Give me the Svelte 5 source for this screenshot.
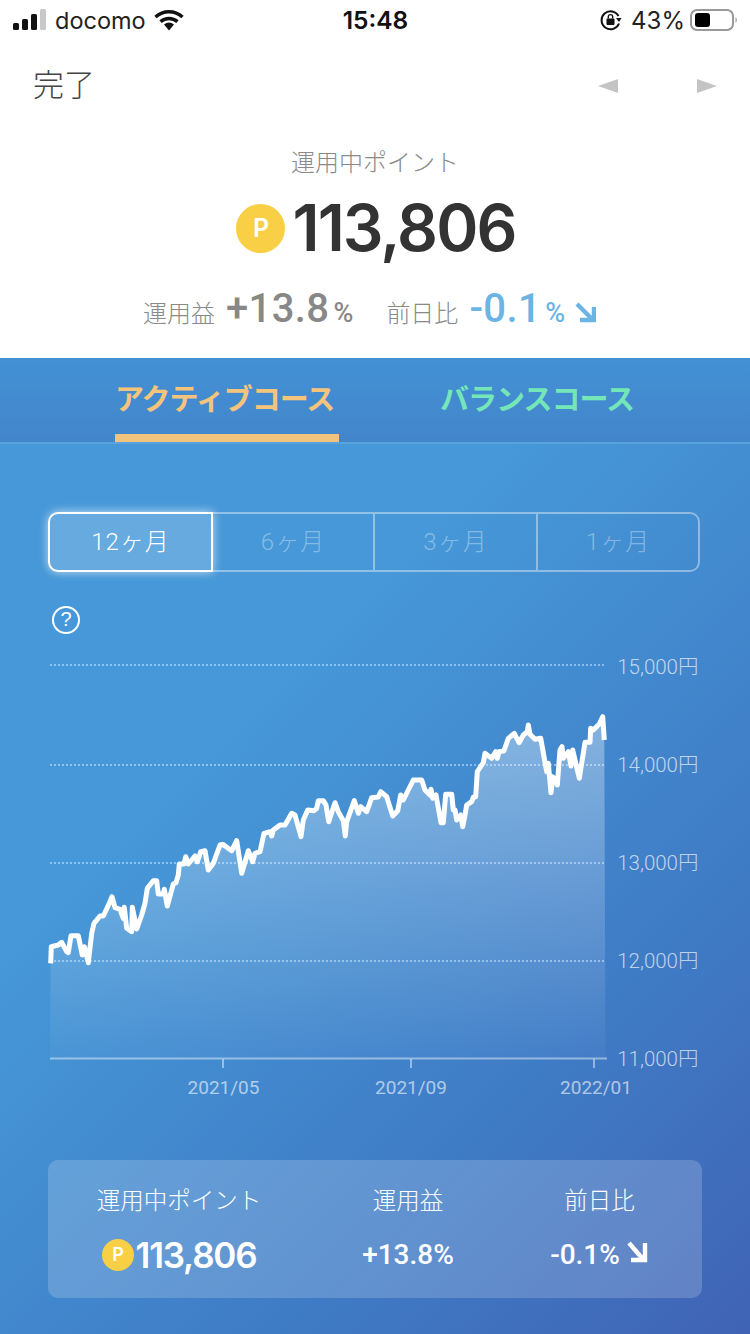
<script>
  const a = [[32,550],[34,500],[55,495],[65,487],[80,515],[85,518],[93,467],[115,467],[127,525],[133,500],[145,548],[155,460],[162,430],[180,408],[190,408],[208,370],[216,350],[225,383],[240,388],[250,415],[253,382],[260,445],[275,455],[277,382],[290,447],[305,405],[315,370],[322,325],[340,302],[350,302],[355,342],[370,342],[373,328],[382,378],[400,312],[408,308],[415,285],[418,252],[432,252],[437,230],[445,252],[465,228],[472,245],[482,215],[495,212],[505,270],[520,250],[540,195],[548,193],[575,212],[590,182],[605,280],[625,212],[638,245],[645,220],[660,215],[672,160],[690,155],[695,168],[700,150],[720,135],[735,135],[755,100],[765,105],[783,170],[790,120],[803,90],[822,92],[830,85],[835,62],[850,62],[858,75],[866,125],[885,68]];
  const b = [[25,335],[40,362],[46,408],[50,365],[73,302],[85,340],[92,320],[110,335],[125,293],[145,291],[152,275],[170,290],[188,348],[203,332],[212,285],[220,300],[250,240],[275,240],[285,270],[300,285],[303,268],[308,295],[318,285],[333,368],[340,368],[347,283],[365,283],[370,330],[375,330],[380,360],[392,345],[398,380],[405,345],[410,315],[425,305],[430,292],[437,290],[442,215],[460,188],[465,160],[485,175],[497,155],[502,175],[507,155],[522,152],[535,115],[553,100],[567,128],[580,105],[592,95],[595,75],[600,103],[615,118],[632,115],[650,215],[655,190],[663,278],[668,230],[682,255],[690,150],[696,140],[700,175],[715,155],[723,198],[728,150],[748,235],[765,127],[780,127],[782,85],[790,90],[808,72],[818,50],[823,120]];
  const pts = [
    ...a.map(([x, y]) => [x / 3 + 40, y / 3 + 780]),
    ...b.map(([x, y]) => [x / 3 + 330, y / 3 + 700])
  ].map(([x, y]) => `${x.toFixed(1)} ${y.toFixed(1)}`);
  const line = 'M' + pts.join(' L');
  const area = `${line} L605.5 1058 L50 1058 Z`;
  const ylabels = [['15,000円', 667], ['14,000円', 765], ['13,000円', 863], ['12,000円', 961], ['11,000円', 1059]];
  const grid = [665, 765, 863, 961];
  const xlabels = [['2021/05', 223, 223.5], ['2021/09', 411, 411], ['2022/01', 594, 596]];
  const ranges = ['12ヶ月', '6ヶ月', '3ヶ月', '1ヶ月'];
</script>

<div class="screen">
  <div class="status">
    <div class="st-left">
      <svg class="signal" width="34" height="22" viewBox="0 0 34 22">
        <rect x="0" y="14" width="6" height="7" rx="1.5" fill="#111" />
        <rect x="9" y="10" width="6" height="11" rx="1.5" fill="#111" />
        <rect x="18" y="5" width="6" height="16" rx="1.5" fill="#111" />
        <rect x="27" y="0" width="6" height="21" rx="1.5" fill="#c8c8c8" />
      </svg>
      <span class="carrier">docomo</span>
      <svg class="wifi" width="30" height="22" viewBox="0 0 30 22">
        <path d="M1.5 8 A20 20 0 0 1 28.5 8" fill="none" stroke="#111" stroke-width="3.4" />
        <path d="M6.5 12.6 A13 13 0 0 1 23.5 12.6" fill="none" stroke="#111" stroke-width="3.4" />
        <path d="M10 15.5 A8 8 0 0 1 20 15.5 L15 21.5 Z" fill="#111" />
      </svg>
    </div>
    <div class="time">15:48</div>
    <div class="st-right">
      <svg width="22" height="22" viewBox="0 0 22 22">
        <path d="M18.5 7 A9 9 0 1 0 19 14.5" fill="none" stroke="#111" stroke-width="2" />
        <path d="M16 9 L21.5 9 L19 13 Z" fill="#111" />
        <rect x="6.5" y="9.5" width="8" height="6.5" rx="1" fill="#111" />
        <path d="M8.3 9.5 V7.8 A2.2 2.2 0 0 1 12.7 7.8 V9.5" fill="none" stroke="#111" stroke-width="1.4" />
      </svg>
      <span class="pct">43%</span>
      <svg width="48" height="22" viewBox="0 0 48 22">
        <rect x="1" y="1" width="42" height="20" rx="6" fill="none" stroke="#999" stroke-width="2" />
        <rect x="5" y="4" width="15" height="14" rx="3" fill="#000" />
        <path d="M45.5 8 A4 4 0 0 1 45.5 14 Z" fill="#999" />
      </svg>
    </div>
  </div>

  <div class="nav">
    <span class="done">完了</span>
    <div class="arrows">
      <span class="tri left"></span>
      <span class="tri right"></span>
    </div>
  </div>

  <header class="head">
    <div class="h-label">運用中ポイント</div>
    <div class="h-total">
      <span class="coin big">P</span>
      <span class="h-num">113,806</span>
    </div>
    <div class="h-stats">
      <span class="s-label">運用益</span>
      <span class="s-num">+13.8</span>
      <span class="s-unit">%</span>
      <span class="s-label second">前日比</span>
      <span class="s-num blue">-0.1</span>
      <span class="s-unit blue">%</span>
      <svg class="s-arrow" width="22" height="22" viewBox="0 0 22 22">
        <path d="M3 3 L17 17 M20 6 V19 H6" fill="none" stroke="#6cb4e4" stroke-width="4.4" />
      </svg>
    </div>
  </header>

  <section class="panel">
    <nav class="tabs">
      <div class="tab active">アクティブコース</div>
      <div class="tab green">バランスコース</div>
    </nav>

    <div class="segments">
      {#each ranges as r, i}
        <div class="seg" class:on={i === 0}>{r}</div>
      {/each}
    </div>

    <svg class="help" width="30" height="30" viewBox="0 0 30 30">
      <circle cx="15" cy="15" r="13" fill="none" stroke="#fff" stroke-width="2" />
      <text x="15" y="21" text-anchor="middle" class="q">?</text>
    </svg>

    <svg class="chart" width="750" height="450" viewBox="0 650 750 450">
      <defs>
        <linearGradient id="fill" gradientUnits="userSpaceOnUse" x1="0" y1="715" x2="0" y2="1058">
          <stop offset="0" stop-color="#fff" stop-opacity="0.36" />
          <stop offset="1" stop-color="#fff" stop-opacity="0.03" />
        </linearGradient>
      </defs>
      <path d={area} fill="url(#fill)" />
      {#each grid as y}
        <line x1="50" x2="605" y1={y} y2={y} class="dots" />
      {/each}
      <path d={line} class="plot" />
      <line x1="50" x2="607" y1="1058.5" y2="1058.5" class="axis" />
      {#each xlabels as [t, tick, cx]}
        <line x1={tick} x2={tick} y1="1059" y2="1068" class="tick" />
        <text x={cx} y="1094" text-anchor="middle" class="xl">{t}</text>
      {/each}
      {#each ylabels as [t, y]}
        <text x="698.5" y={y + 7} text-anchor="end" class="yl">{t}</text>
      {/each}
    </svg>

    <div class="summary">
      <div class="col c1">
        <div class="c-label">運用中ポイント</div>
        <div class="c-val total"><span class="coin small">P</span><span>113,806</span></div>
      </div>
      <div class="col c2">
        <div class="c-label">運用益</div>
        <div class="c-val">+13.8%</div>
      </div>
      <div class="col c3">
        <div class="c-label">前日比</div>
        <div class="c-val">-0.1%
          <svg width="24" height="26" viewBox="0 0 22 26" class="c-arrow">
            <path d="M3 4 L16 19 M19 4 V21 H5" fill="none" stroke="#fff" stroke-width="4.4" />
          </svg>
        </div>
      </div>
    </div>
  </section>
</div>

<style>
  :global(body) { margin: 0; }
  .screen {
    width: 750px;
    height: 1334px;
    display: flex;
    flex-direction: column;
    overflow: hidden;
    background: #fff;
    font-family: "Noto Sans CJK JP", "Noto Sans", sans-serif;
  }
  .status {
    height: 40px;
    flex: none;
    display: grid;
    grid-template-columns: 1fr auto 1fr;
    align-items: center;
    padding: 0 12px 0 13px;
    color: #111;
    font-family: "Inter", "Liberation Sans", sans-serif;
  }
  .st-left { display: flex; align-items: center; gap: 8px; }
  .carrier { font-size: 23.5px; color: #222; }
  .time { font-size: 24.5px; font-weight: 600; }
  .st-right { display: flex; align-items: center; justify-content: flex-end; gap: 9px; }
  .pct { font-size: 24px; color: #222; margin-right: -4px; }

  .nav {
    height: 88px;
    flex: none;
    display: flex;
    align-items: center;
    justify-content: space-between;
    padding: 0 33px;
  }
  .done { font-size: 31px; color: #444; font-weight: 300; line-height: 1; margin-top: -4px; }
  .arrows { display: flex; gap: 79px; margin-top: 3px; }
  .tri { width: 0; height: 0; border-top: 7px solid transparent; border-bottom: 7px solid transparent; }
  .tri.left { border-right: 20px solid #c4c4c4; }
  .tri.right { border-left: 20px solid #c4c4c4; }

  .head {
    height: 230px;
    flex: none;
    display: flex;
    flex-direction: column;
    align-items: center;
    box-sizing: border-box;
    padding-top: 16px;
  }
  .h-label { font-size: 24px; line-height: 34px; color: #8a8a8a; font-weight: 300; }
  .h-total { display: flex; align-items: center; gap: 7px; height: 84px; margin-top: 8px; padding-left: 2px; }
  .coin {
    display: flex;
    align-items: center;
    justify-content: center;
    border-radius: 50%;
    background: #f9cf46;
    color: #fff;
    font-family: "Inter", sans-serif;
    font-weight: 600;
  }
  .coin.big { width: 49px; height: 49px; font-size: 25px; }
  .coin.small { width: 32px; height: 32px; font-size: 18px; }
  .h-num {
    font-family: "Inter", sans-serif;
    font-size: 64px;
    font-weight: 600;
    color: #333;
    letter-spacing: -1.9px;
    line-height: 84px;
  }
  .h-stats { display: flex; align-items: baseline; margin-top: 15px; padding-right: 11px; }
  .s-label { font-size: 24px; color: #8a8a8a; font-weight: 300; }
  .s-label.second { margin-left: 33px; }
  .s-num {
    font-family: "Roboto", sans-serif;
    font-size: 40px;
    font-weight: 500;
    color: #888;
    margin-left: 11px;
    letter-spacing: 0.4px;
    line-height: 48px;
  }
  .s-unit { font-family: "Roboto", sans-serif; font-size: 27px; font-weight: 500; color: #888; margin-left: 4px; }
  .blue { color: #6cb4e4; }
  .s-arrow { margin-left: 9px; align-self: center; margin-top: 6px; }

  .panel {
    flex: 1;
    display: flex;
    flex-direction: column;
    background: linear-gradient(135deg, #4698d9 0%, #4698d8 35%, #3f7cc6 72%, #4063b5 100%);
  }
  .tabs {
    height: 86px;
    flex: none;
    box-sizing: border-box;
    display: flex;
    padding-left: 115px;
    gap: 101px;
    background: linear-gradient(180deg, #4491d5 0%, #4285cb 100%);
    border-bottom: 2px solid #58a2de;
  }
  .tab {
    font-size: 29px;
    font-weight: 700;
    line-height: 78px;
    color: #74e6b8;
    letter-spacing: -1px;
    white-space: nowrap;
  }
  .tab.active {
    width: 224px;
    color: #f4c47d;
    border-bottom: 8px solid #f0c47d;
    height: 84px;
    box-sizing: border-box;
  }
  .segments {
    margin: 68px 50px 0 48px;
    height: 60px;
    display: grid;
    grid-template-columns: 165px 162px 163px 1fr;
    border: 2px solid rgba(255,255,255,.4);
    border-left: none;
    border-radius: 10px;
    box-sizing: border-box;
    flex: none;
  }
  .seg {
    display: flex;
    align-items: center;
    justify-content: center;
    padding-bottom: 5px;
    font-family: "Roboto", "Noto Sans CJK JP", sans-serif;
    font-size: 24px;
    font-weight: 300;
    letter-spacing: 1px;
    color: rgba(255,255,255,.36);
    border-right: 2px solid rgba(255,255,255,.4);
    box-sizing: border-box;
  }
  .seg:last-child { border-right: none; }
  .seg.on {
    margin: -2px 0;
    color: #fff;
    background: rgba(255,255,255,.18);
    border: 2px solid #fff;
    border-radius: 10px 0 0 10px;
    box-shadow: 0 0 10px rgba(255,255,255,.7);
    height: 60px;
  }
  .help { margin: 33px 0 0 51px; flex: none; display: block; }
  .q { font: 20px "Liberation Sans", sans-serif; fill: #fff; }
  .chart { display: block; flex: none; margin-top: 15px; }
  .plot { fill: none; stroke: #fff; stroke-width: 5; stroke-linejoin: round; }
  .dots { stroke: rgba(255,255,255,.42); stroke-width: 2; stroke-dasharray: 2 2; }
  .axis { stroke: rgba(255,255,255,.45); stroke-width: 2; }
  .tick { stroke: rgba(255,255,255,.45); stroke-width: 2; }
  .xl { font-family: "Roboto", sans-serif; font-size: 19px; fill: rgba(255,255,255,.6); }
  .yl { font-family: "Roboto", "Noto Sans CJK JP", sans-serif; font-size: 20.5px; font-weight: 300; fill: rgba(255,255,255,.68); }
  .summary {
    margin: 60px 48px 0;
    height: 138px;
    flex: none;
    border-radius: 10px;
    background: rgba(255,255,255,.18);
    display: flex;
    color: #fff;
  }
  .col { display: flex; flex-direction: column; align-items: center; padding-top: 21px; box-sizing: border-box; }
  .c1 { width: 262px; }
  .c2 { width: 196px; }
  .c3 { width: 187px; }
  .c-label { font-size: 23.5px; font-weight: 300; line-height: 36px; }
  .c-val {
    font-family: "Roboto", sans-serif;
    font-size: 28px;
    font-weight: 500;
    height: 60px;
    line-height: 60px;
    display: flex;
    align-items: center;
    gap: 5px;
    margin-top: 8px;
  }
  .c-val.total { font-family: "Inter", sans-serif; font-size: 35px; font-weight: 600; letter-spacing: -1.2px; gap: 2px; }
  .c-arrow { margin-top: -6px; }
</style>
